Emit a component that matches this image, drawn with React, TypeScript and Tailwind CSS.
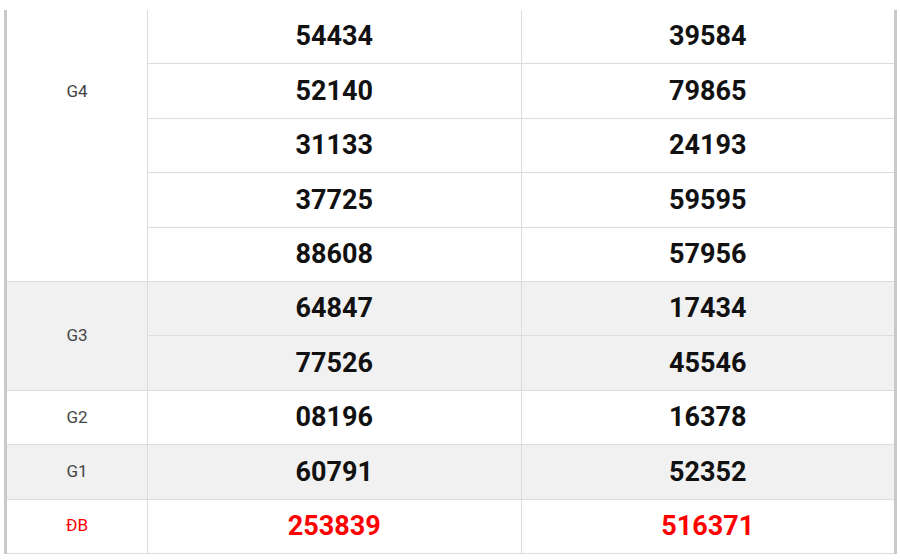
type Group = { label: string; rows: [string, string][]; gray?: boolean; special?: boolean; labelTop?: boolean };

const groups: Group[] = [
  {
    label: 'G4',
    labelTop: true,
    rows: [
      ['54434', '39584'],
      ['52140', '79865'],
      ['31133', '24193'],
      ['37725', '59595'],
      ['88608', '57956'],
    ],
  },
  { label: 'G3', gray: true, rows: [['64847', '17434'], ['77526', '45546']] },
  { label: 'G2', rows: [['08196', '16378']] },
  { label: 'G1', gray: true, rows: [['60791', '52352']] },
  { label: 'ĐB', special: true, rows: [['253839', '516371']] },
];

export default function App() {
  return (
    <div className="w-[900px] h-[560px] bg-white overflow-hidden pt-[10px] pl-[4px]" style={{ fontFamily: 'Roboto, "Liberation Sans", sans-serif' }}>
      <div className="w-[893px] border-x-[3px] border-[#c9c9c9]">
        {groups.map((g) => (
          <div key={g.label} className={`flex ${g.gray ? 'bg-[#f1f1f1]' : 'bg-white'}`}>
            <div
              className={`w-[141px] shrink-0 flex justify-center border-r border-b border-[#dcdcdc] text-[17px] ${g.labelTop ? 'items-start pt-[69px]' : 'items-center'} ${g.special ? 'text-[#ff0000]' : 'text-[#444]'}`}
            >
              {g.label}
            </div>
            <div className="flex-1">
              {g.rows.map((r, i) => (
                <div key={i} className="flex h-[54.4px] border-b border-[#dcdcdc]">
                  {r.map((n, j) => (
                    <div
                      key={j}
                      className={`flex-1 flex items-center justify-center font-bold text-[27px] ${j === 0 ? 'border-r border-[#dcdcdc]' : ''} ${g.special ? 'text-[#ff0000]' : 'text-[#111]'}`}
                    >
                      {n}
                    </div>
                  ))}
                </div>
              ))}
            </div>
          </div>
        ))}
      </div>
    </div>
  );
}
